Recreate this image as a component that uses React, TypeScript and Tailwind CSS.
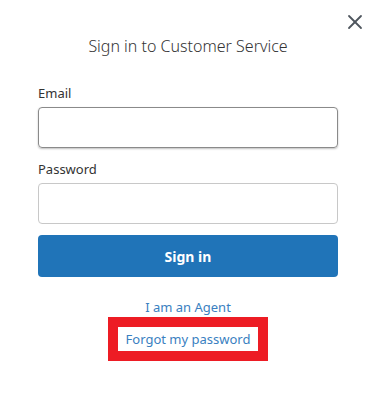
import { X } from 'lucide-react'

export default function App() {
  return (
    <div
      className="relative w-[378px] h-[403px] bg-white text-[#333]"
      style={{ fontFamily: '"Noto Sans", "Open Sans", sans-serif' }}
    >
      <button className="absolute right-[11px] top-[10px] text-[#4f565e]">
        <X size={24} strokeWidth={1.8} />
      </button>

      <div className="flex w-[300px] flex-col ml-[38px] pt-[35px]">
        <h1 className="text-center text-[16px] font-light leading-[22px] text-[#333]">
          Sign in to Customer Service
        </h1>

        <label className="mt-[27px] text-[13px] leading-[18px] text-[#333]">Email</label>
        <input
          className="mt-[5px] h-[41px] w-full rounded-[4px] border border-[#8a8a8a] px-3 shadow-[0_1px_2px_rgba(0,0,0,0.25)] outline-none"
          type="email"
        />

        <label className="mt-[12px] text-[13px] leading-[18px] text-[#333]">Password</label>
        <input
          className="mt-[5px] h-[41px] w-full rounded-[4px] border border-[#c8c8c8] px-3 outline-none"
          type="password"
        />

        <button className="mt-[11px] h-[42px] w-full rounded-[4px] bg-[#2074b8] text-[14px] font-bold text-white">
          Sign in
        </button>

        <div className="mt-[21px] flex flex-col items-center">
          <a className="text-[13px] leading-[18px] text-[#3a7fc1]" href="#">
            I am an Agent
          </a>
          <div className="mt-px border-[10px] border-[#ed1c24] px-[8px] py-[3px]">
            <a className="block text-[13px] leading-[18px] text-[#3a7fc1]" href="#">
              Forgot my password
            </a>
          </div>
        </div>
      </div>
    </div>
  )
}
